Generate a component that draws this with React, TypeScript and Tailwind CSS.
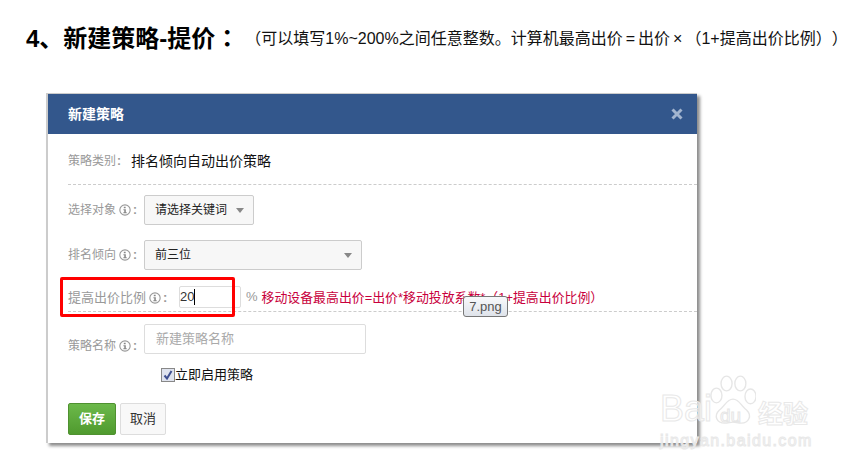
const Info = () => (
  <svg width="12" height="12" viewBox="0 0 13 13" className="shrink-0 ml-[3px]">
    <circle cx="6.5" cy="6.5" r="5.6" fill="none" stroke="#999" strokeWidth="1.2" />
    <path d="M5.2 3h2v1.5h-2zM4.8 5.7h2.6v3.2h1V10H4.7V8.9h1V6.8H4.8z" fill="#888" />
  </svg>
);

const Caret = () => <span className="w-0 h-0 border-x-[4px] border-x-transparent border-t-[5px] border-t-[#888]" />;

const Label = ({ text, info = true, className = "" }: { text: string; info?: boolean; className?: string }) => (
  <div className={`flex items-center text-[#999] whitespace-nowrap ${className}`}>
    {text}
    {info && <Info />}
    <span className={info ? "ml-[2px] font-bold" : "ml-[1px] font-bold"}>:</span>
  </div>
);

export default function App() {
  return (
    <div
      className="relative w-[857px] h-[467px] overflow-hidden bg-white text-[#222] [text-spacing-trim:space-all]"
      style={{ fontFamily: '"Liberation Sans","Noto Sans CJK SC",sans-serif' }}
    >
      <div className="flex pl-[26px] pt-[22px] h-[93px] items-start whitespace-nowrap">
        <span className="text-[24px] leading-[30px] font-bold text-black">
          4、新建策略-提价<span style={{ fontFamily: '"Noto Sans CJK TC",sans-serif' }}>：</span>
        </span>
        <span className="ml-[6px] text-[16px] leading-[30px] text-[#111] pt-[2px]">
          （可以填写1%~200%之间任意整数。计算机最高出价<span className="mx-[3px]">=</span>出价<span className="mx-[3px]">×</span>（1+提高出价比例））
        </span>
      </div>

      <div className="ml-[46px] w-[649px] h-[349px] bg-white border-t border-l-2 border-[#ccc] shadow-[3px_3px_3px_rgba(0,0,0,0.45)] box-content">
        <div className="flex items-center justify-between h-[40px] bg-[#33578c] pl-[20px] pr-[14px]">
          <span className="text-[14px] font-bold text-white">新建策略</span>
          <svg width="12" height="12" viewBox="0 0 12 12">
            <path d="M1.5 1.5l9 9M10.5 1.5l-9 9" stroke="#a3b5cf" strokeWidth="3" />
          </svg>
        </div>

        <div className="pl-[20px]">
          <div className="flex items-center h-[51px] pt-[4px] border-b border-dashed border-[#ccc]">
            <Label text="策略类别" info={false} className="w-[63px] text-[12px]" />
            <span className="text-[14px] text-[#111]">排名倾向自动出价策略</span>
          </div>

          <div className="flex items-center mt-[10px] h-[30px]">
            <Label text="选择对象" className="w-[76px] text-[12px]" />
            <div className="flex items-center justify-between w-[110px] h-[30px] pl-[10px] pr-[9px] rounded-[2px] border border-[#ccc] bg-[#f7f7f7] text-[12px]">
              请选择关键词 <Caret />
            </div>
          </div>

          <div className="flex items-center mt-[15px] h-[30px]">
            <Label text="排名倾向" className="w-[76px] text-[12px]" />
            <div className="flex items-center justify-between w-[218px] h-[30px] pl-[10px] pr-[9px] rounded-[2px] border border-[#ccc] bg-[#f7f7f7] text-[12px]">
              前三位 <Caret />
            </div>
          </div>

          <div className="flex items-center pt-[16px] pb-[3px] border-b border-dashed border-[#ccc]">
            <Label text="提高出价比例" className="w-[111px] text-[13px] mt-[1px]" />
            <div className="flex items-center w-[62px] h-[22px] border border-[#ddd] rounded-[2px] text-[13px] text-[#333]">
              <span className="border-r border-black leading-[16px]">20</span>
            </div>
            <span className="ml-[5px] text-[13px] text-[#999]">%</span>
            <span className="ml-[4px] mt-[2px] text-[12.9px] text-[#c8003c] whitespace-nowrap">移动设备最高出价=出价*移动投放系数*（1+提高出价比例）</span>
          </div>

          <div className="flex items-start mt-[12px]">
            <Label text="策略名称" className="w-[76px] mt-[13px] text-[12px]" />
            <div className="flex items-center w-[222px] h-[30px] pl-[11px] border border-[#ddd] rounded-[2px] text-[13px] text-[#aaa]">新建策略名称</div>
          </div>

          <div className="flex items-center ml-[93px] mt-[11px] h-[18px] text-[13px] text-[#111]">
            <span className="flex items-center justify-center w-[14px] h-[14px] border border-[#888] bg-[#dfe3ee]">
              <svg width="10" height="10" viewBox="0 0 10 10"><path d="M1.5 5.5l2.5 3L8.5 1" fill="none" stroke="#3f4f90" strokeWidth="2" /></svg>
            </span>
            立即启用策略
          </div>

          <div className="flex gap-[4px] mt-[19px]">
            <button className="w-[48px] h-[32px] rounded-[2px] border border-[#4f9130] bg-gradient-to-b from-[#6cb94a] to-[#4f9a2e] text-[13px] font-bold text-white">保存</button>
            <button className="w-[46px] h-[32px] rounded-[2px] border border-[#ddd] bg-[#f8f8f8] text-[13px] text-[#333]">取消</button>
          </div>
        </div>
      </div>

      <div className="absolute left-[60px] top-[277px] w-[175px] h-[40px] border-[3px] border-[#f00] rounded-[2px]" />

      <div className="absolute left-[463px] top-[296px] w-[45px] h-[21px] flex items-center justify-center rounded-[3px] border border-[#777] bg-gradient-to-b from-[#f8f9fb] to-[#dfe3ea] text-[13px] text-[#555]">7.png</div>

      <div className="absolute left-[640px] top-[372px] w-[172px] h-[78px] whitespace-nowrap">
        <span className="absolute left-[20px] top-[17px] text-[36px] leading-[40px] text-white/60 [-webkit-text-stroke:1px_#e8e8e8]">Bai</span>
        <svg width="46" height="52" viewBox="0 0 50 56" className="absolute left-[70px] top-[3px]">
          <g fill="rgba(255,255,255,.5)" stroke="#e6e6e6" strokeWidth="1.5">
            <ellipse cx="7" cy="22" rx="6" ry="8" />
            <ellipse cx="18" cy="9" rx="6" ry="8" />
            <ellipse cx="33" cy="9" rx="6" ry="8" />
            <ellipse cx="44" cy="23" rx="6" ry="8" />
            <path d="M25 26c7 0 9 8 15 12 6 6 2 14-6 14-4 0-6-1-9-1s-5 1-9 1c-9 0-12-8-6-14 6-4 8-12 15-12z" />
          </g>
        </svg>
        <span className="absolute left-[80px] top-[34px] text-[19px] leading-[20px] text-white/60 [-webkit-text-stroke:1px_#e6e6e6]">du</span>
        <span className="absolute left-[118px] top-[27px] text-[25px] leading-[30px] font-bold text-white/60 [-webkit-text-stroke:1px_#e8e8e8]">经验</span>
        <span className="absolute left-[20px] top-[60px] text-[16px] leading-[18px] tracking-[1.4px] text-white/60 [-webkit-text-stroke:1px_#e8e8e8]">jingyan.baidu.com</span>
      </div>
    </div>
  );
}
